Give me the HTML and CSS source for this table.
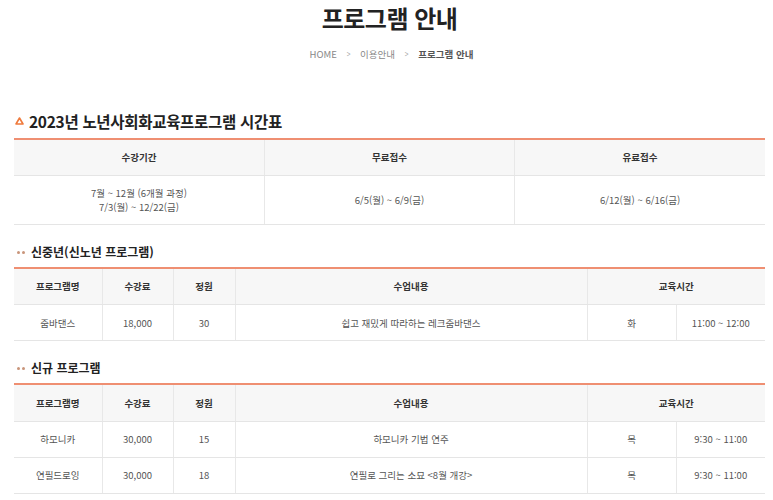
FILE: index.html
```html
<!DOCTYPE html>
<html lang="ko">
<head>
<meta charset="utf-8">
<title>프로그램 안내</title>
<link rel="stylesheet" href="styles.css">
</head>
<body>
<div class="page">
  <h1 class="title">프로그램 안내</h1>
  <div class="crumb">
    <span class="crumb-item">HOME</span>
    <span class="crumb-sep">&gt;</span>
    <span class="crumb-item">이용안내</span>
    <span class="crumb-sep">&gt;</span>
    <span class="crumb-item crumb-current">프로그램 안내</span>
  </div>

  <h2 class="sec-title">
    <svg class="tri" width="9" height="8" viewBox="0 0 9 8"><path d="M4.5 1 L8 7 L1 7 Z" fill="none" stroke="#ef7a3c" stroke-width="1.6" stroke-linejoin="round"/></svg>
    2023년 노년사회화교육프로그램 시간표
  </h2>
  <table class="tbl tbl-sched">
    <colgroup><col class="c-a"><col class="c-a"><col class="c-a"></colgroup>
    <thead>
      <tr><th>수강기간</th><th>무료접수</th><th>유료접수</th></tr>
    </thead>
    <tbody>
      <tr class="tall"><td>7월 ~ 12월 (6개월 과정)<br>7/3(월) ~ 12/22(금)</td><td>6/5(월) ~ 6/9(금)</td><td>6/12(월) ~ 6/16(금)</td></tr>
    </tbody>
  </table>

  <h3 class="sub-title"><span class="dots"><i></i><i></i></span>신중년(신노년 프로그램)</h3>
  <table class="tbl tbl-prog">
    <colgroup><col class="c1"><col class="c2"><col class="c3"><col class="c4"><col class="c5"><col class="c6"></colgroup>
    <thead>
      <tr><th>프로그램명</th><th>수강료</th><th>정원</th><th>수업내용</th><th colspan="2">교육시간</th></tr>
    </thead>
    <tbody>
      <tr><td>줌바댄스</td><td>18,000</td><td>30</td><td>쉽고 재밌게 따라하는 레크줌바댄스</td><td>화</td><td>11:00 ~ 12:00</td></tr>
    </tbody>
  </table>

  <h3 class="sub-title"><span class="dots"><i></i><i></i></span>신규 프로그램</h3>
  <table class="tbl tbl-prog">
    <colgroup><col class="c1"><col class="c2"><col class="c3"><col class="c4"><col class="c5"><col class="c6"></colgroup>
    <thead>
      <tr><th>프로그램명</th><th>수강료</th><th>정원</th><th>수업내용</th><th colspan="2">교육시간</th></tr>
    </thead>
    <tbody>
      <tr><td>하모니카</td><td>30,000</td><td>15</td><td>하모니카 기법 연주</td><td>목</td><td>9:30 ~ 11:00</td></tr>
      <tr><td>연필드로잉</td><td>30,000</td><td>18</td><td>연필로 그리는 소묘 &lt;8월 개강&gt;</td><td>목</td><td>9:30 ~ 11:00</td></tr>
    </tbody>
  </table>
</div>
</body>
</html>
```

FILE: styles.css
```css
* { box-sizing: border-box; }
html, body { margin: 0; padding: 0; background: #fff; }
body {
  font-family: "Noto Sans CJK KR", "Noto Sans", sans-serif;
  color: #333;
}
.page { padding: 0 8px 0 14px; }

.title {
  margin: 0;
  font-size: 24px;
  line-height: 36px;
  font-weight: 700;
  text-align: center;
  color: #222;
  letter-spacing: -0.5px;
}
.crumb {
  margin-top: 10px;
  height: 16px;
  line-height: 16px;
  font-size: 9.5px;
  text-align: center;
  color: #888;
  display: flex;
  justify-content: center;
  gap: 9px;
  padding-left: 4px;
}
.crumb-sep { color: #aaa; transform: scaleX(0.7); }
.crumb-current { color: #555; font-weight: 700; }

.sec-title {
  margin: 47px 0 5px;
  font-size: 15.5px;
  line-height: 24px;
  font-weight: 700;
  color: #222;
  display: flex;
  align-items: center;
  gap: 5px;
  letter-spacing: -0.3px;
}
.tri { margin-left: 1px; }

.sub-title {
  margin: 17px 0 5px;
  font-size: 12px;
  line-height: 20px;
  font-weight: 700;
  color: #222;
  display: flex;
  align-items: center;
}
.dots { display: inline-flex; gap: 2px; margin: 1px 6px 0 3px; }
.dots i { width: 3px; height: 3px; border-radius: 50%; background: #c9957a; display: block; }

.tbl {
  width: 100%;
  border-collapse: collapse;
  table-layout: fixed;
  border-top: 2px solid #ef8f72;
  font-size: 9.5px;
}
.tbl th, .tbl td {
  text-align: center;
  padding: 0 4px;
  border-left: 1px solid #e8e8e8;
  border-bottom: 1px solid #e5e5e5;
}
.tbl th:first-child, .tbl td:first-child { border-left: 0; }
.tbl th {
  background: #f7f7f7;
  height: 36px;
  font-weight: 700;
  color: #333;
}
.tbl td {
  height: 36px;
  color: #555;
  line-height: 14px;
}
.tbl-prog th { height: 37px; }
.tbl .tall td { height: 49px; }

.c-a { width: 33.33%; }
.c1 { width: 88px; }
.c2 { width: 71px; }
.c3 { width: 62px; }
.c4 { width: 352px; }
.c5 { width: 89px; }
.c6 { width: 89px; }
```
